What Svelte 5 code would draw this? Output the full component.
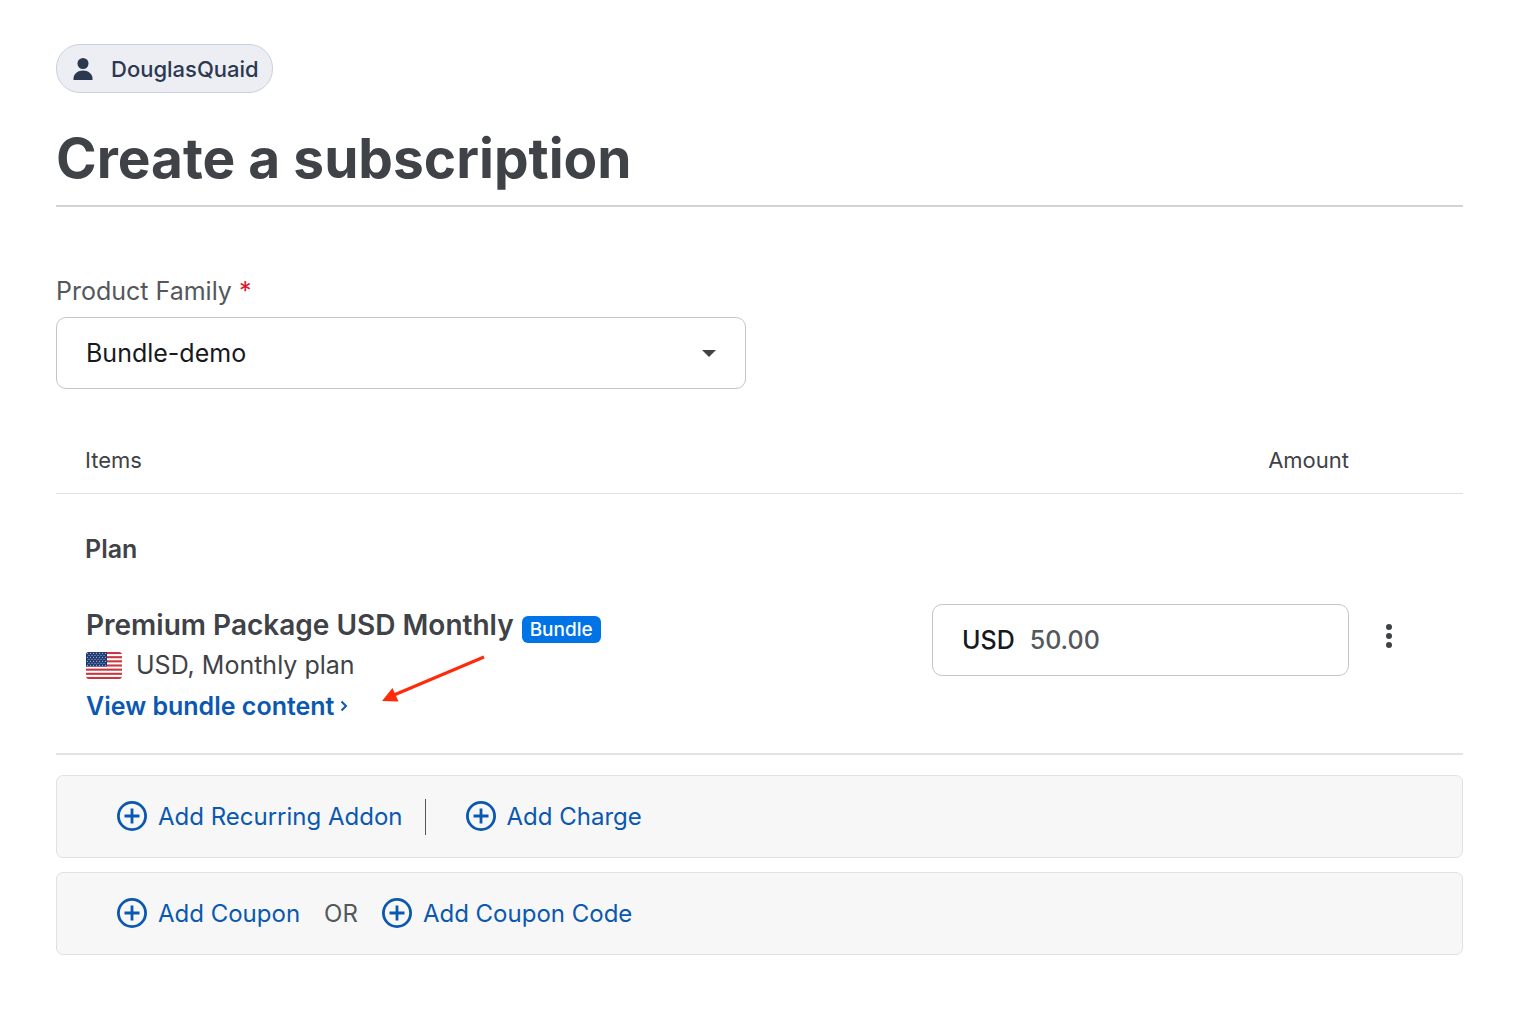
<script>
  let families = ["Bundle-demo"];
  let family = families[0];
  let amount = "50.00";

  let plan = {
    name: "Premium Package USD Monthly",
    currency: "USD",
    period: "Monthly plan"
  };

  // staggered star rows of the flag canton
  const stars = [];
  for (let row = 0; row < 7; row++) {
    for (let col = 0; col < 7 - (row % 2); col++) {
      stars.push([1.5 + col * 3 + (row % 2) * 1.5, 1.3 + row * 2]);
    }
  }
</script>

{#snippet plus()}
  <svg class="plus" viewBox="0 0 30 30" aria-hidden="true">
    <circle cx="15" cy="15" r="13.6" />
    <path d="M15 7.5v15M7.5 15h15" />
  </svg>
{/snippet}

<main>
  <div class="customer">
    <svg viewBox="0 0 20 22" aria-hidden="true">
      <circle cx="10" cy="5.5" r="5.5" />
      <path d="M0.5 22v-1.500c0-4.500 4.500-8 9.500-8s9.500 3.500 9.500 8v1.500z" />
    </svg>
    <span>DouglasQuaid</span>
  </div>

  <h1>Create a subscription</h1>

  <div class="field">
    <label for="family">Product Family <span class="required">*</span></label>
    <div class="select">
      <select id="family" bind:value={family} required>
        {#each families as f}
          <option value={f}>{f}</option>
        {/each}
      </select>
      <svg viewBox="0 0 14 7" aria-hidden="true"><path d="M0 0h14l-7 7z" /></svg>
    </div>
  </div>

  <table>
    <thead>
      <tr>
        <th scope="col">Items</th>
        <th scope="col" class="amountCol">Amount</th>
        <th class="menuCol"></th>
      </tr>
    </thead>
    <tbody>
      <tr class="group">
        <th scope="rowgroup" colspan="3">Plan</th>
      </tr>
      <tr>
        <td class="item">
          <div class="name">
            <span>{plan.name}</span>
            <span class="badge">Bundle</span>
          </div>
          <div class="meta">
            <svg class="flag" viewBox="0 0 36 27" aria-hidden="true">
              <rect width="36" height="27" fill="#fff" />
              {#each Array(7) as _, i}
                <rect y={i * 4.154} width="36" height="2.077" fill="#c8363f" />
              {/each}
              <rect width="21" height="14.500" fill="#1f3c74" />
              {#each stars as [x, y]}
                <circle cx={x} cy={y} r="0.5" fill="#dfe5f2" />
              {/each}
            </svg>
            <span>{plan.currency}, {plan.period}</span>
          </div>
          <div class="view">
            <a href="#bundle">
              View bundle content
              <svg viewBox="0 0 8 12" aria-hidden="true"><path d="M1.500 1.500L6 6l-4.500 4.500" /></svg>
            </a>
            <svg class="arrow" viewBox="0 0 104 48" aria-hidden="true">
              <path class="shaft" d="M102 2L12 40" />
              <path class="head" d="M0 46L10.500 33l6 13.500z" />
            </svg>
          </div>
        </td>
        <td>
          <label class="amount">
            <span>{plan.currency}</span>
            <input type="text" inputmode="decimal" bind:value={amount} aria-label="Amount in {plan.currency}" />
          </label>
        </td>
        <td>
          <button class="menu" aria-label="More options">
            <svg viewBox="0 0 6 24" aria-hidden="true">
              <circle cx="3" cy="3" r="3" />
              <circle cx="3" cy="12" r="3" />
              <circle cx="3" cy="21" r="3" />
            </svg>
          </button>
        </td>
      </tr>
    </tbody>
  </table>

  <div class="bar">
    <button class="add">{@render plus()}Add Recurring Addon</button>
    <span class="divider"></span>
    <button class="add">{@render plus()}Add Charge</button>
  </div>

  <div class="bar">
    <button class="add">{@render plus()}Add Coupon</button>
    <span class="or">OR</span>
    <button class="add">{@render plus()}Add Coupon Code</button>
  </div>
</main>

<style>
  :global(body) {
    background: #fff;
  }

  main {
    box-sizing: border-box;
    padding: 44px 57px 56px 56px;
    font-family: Inter, "Liberation Sans", sans-serif;
    font-size: 25px;
    line-height: 32px;
    color: #3f4247;
  }

  button,
  input,
  select {
    font: inherit;
    color: inherit;
    background: none;
    border: 0;
    padding: 0;
    margin: 0;
  }

  button {
    cursor: pointer;
  }

  svg {
    display: block;
    flex: none;
  }

  .customer {
    display: inline-flex;
    align-items: center;
    gap: 18px;
    box-sizing: border-box;
    height: 49px;
    padding: 0 13px 0 16px;
    border: 1px solid #c9d0e0;
    border-radius: 24px;
    background: #edeef4;
    color: #2b3950;
    font-size: 22px;
    font-weight: 500;
  }

  .customer svg {
    width: 20px;
    height: 22px;
    fill: #2b3950;
  }

  h1 {
    margin: 29px 0 0;
    padding-bottom: 11px;
    border-bottom: 2px solid #d1d3d4;
    font-size: 55px;
    line-height: 72px;
    font-weight: 700;
  }

  .field {
    margin-top: 68px;
    max-width: 690px;
  }

  .field label {
    display: block;
    color: #54575c;
  }

  .required {
    color: #e0182d;
  }

  .select {
    display: grid;
    align-items: center;
    margin-top: 10px;
  }

  .select > :global(*) {
    grid-area: 1 / 1;
  }

  .select select {
    appearance: none;
    width: 100%;
    height: 72px;
    padding: 0 48px 0 29px;
    border: 1px solid #c3c4cc;
    border-radius: 10px;
    color: #16191d;
  }

  .select svg {
    justify-self: end;
    width: 14px;
    height: 7px;
    margin-right: 30px;
    fill: #3f4247;
    pointer-events: none;
  }

  table {
    width: 100%;
    margin-top: 37px;
    table-layout: fixed;
    border-collapse: collapse;
    border-bottom: 2px solid #e1e2e4;
  }

  th,
  td {
    padding: 0;
    text-align: left;
    vertical-align: top;
  }

  thead th {
    padding: 18px 0 17px;
    border-bottom: 1px solid #dddfe1;
    font-size: 22px;
    font-weight: 400;
  }

  tr > th:first-child {
    padding-left: 29px;
  }

  thead .amountCol {
    width: 417px;
    text-align: right;
  }

  .menuCol {
    width: 114px;
  }

  .group th {
    padding-top: 39px;
    padding-bottom: 39px;
    font-weight: 600;
  }

  .item {
    padding: 1px 0 0 30px;
  }

  .name {
    display: flex;
    align-items: center;
    gap: 8px;
    line-height: 40px;
    font-size: 28px;
    font-weight: 600;
  }

  .badge {
    margin-top: 8px;
    padding: 0 8px;
    border-radius: 6px;
    background: #0073e6;
    color: #fff;
    font-size: 19px;
    line-height: 27px;
    font-weight: 500;
  }

  .meta {
    display: flex;
    align-items: center;
    gap: 14px;
    line-height: 40px;
  }

  .flag {
    width: 36px;
    height: 27px;
    border-radius: 3px;
  }

  .view {
    position: relative;
    padding-bottom: 26px;
    line-height: 42px;
  }

  a {
    display: inline-flex;
    align-items: center;
    gap: 6px;
    color: #0a58b0;
    font-weight: 600;
    text-decoration: none;
  }

  a svg {
    width: 8px;
    height: 12px;
    fill: none;
    stroke: #0a58b0;
    stroke-width: 2;
  }

  .arrow {
    position: absolute;
    left: 296px;
    top: -30px;
    width: 104px;
    height: 48px;
  }

  .shaft {
    stroke: #ff2a0a;
    stroke-width: 3;
  }

  .head {
    fill: #ff2a0a;
  }

  .amount {
    display: flex;
    align-items: center;
    gap: 15px;
    box-sizing: border-box;
    height: 72px;
    padding: 0 29px;
    border: 1px solid #c3c4cc;
    border-radius: 10px;
    color: #16191d;
    font-weight: 500;
  }

  .amount input {
    flex: 1;
    min-width: 0;
    color: #54575c;
  }

  .menu {
    margin: 8px 0 0 25px;
    padding: 12px;
  }

  .menu svg {
    width: 6px;
    height: 24px;
    fill: #3f4247;
  }

  .bar {
    display: flex;
    align-items: center;
    box-sizing: border-box;
    min-height: 83px;
    margin-top: 14px;
    padding: 0 60px;
    border: 1px solid #e0e1e2;
    border-radius: 7px;
    background: #f7f7f7;
    font-size: 24px;
  }

  table + .bar {
    margin-top: 20px;
  }

  .add {
    display: flex;
    align-items: center;
    gap: 11px;
    color: #0a58b0;
  }

  .plus {
    width: 30px;
    height: 30px;
    margin-bottom: 2px;
    fill: none;
    stroke: #0a58b0;
    stroke-width: 2.8;
  }

  .divider {
    width: 1px;
    height: 36px;
    margin: 0 40px 0 22px;
    background: #54575c;
  }

  .or {
    margin: 0 24px;
    color: #54575c;
  }
</style>
